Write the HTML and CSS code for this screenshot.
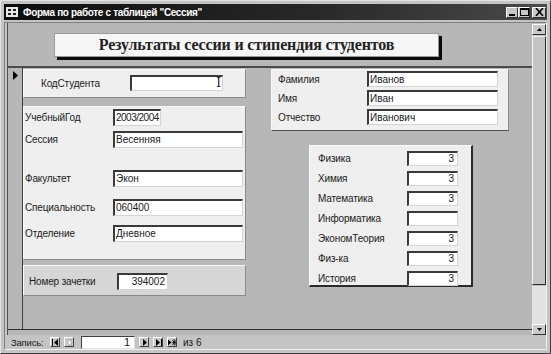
FILE: index.html
```html
<!DOCTYPE html>
<html lang="ru">
<head>
  <meta charset="UTF-8">
  <title>Форма по работе с таблицей "Сессия"</title>
  <link rel="stylesheet" href="styles.css">
</head>
<body>
<div class="window">
  <div class="titlebar">
    <svg class="app-icon" width="12" height="10" viewBox="0 0 12 10">
      <rect x="0.5" y="0.5" width="11" height="9" fill="#e8e8e8" stroke="#e8e8e8"/>
      <rect x="2" y="2" width="3" height="2" fill="#202020"/>
      <rect x="7" y="2" width="3" height="2" fill="#202020"/>
      <rect x="2" y="6" width="3" height="2" fill="#202020"/>
      <rect x="7" y="6" width="3" height="2" fill="#202020"/>
    </svg>
    <span class="title">Форма по работе с таблицей "Сессия"</span>
    <div class="caption-buttons">
      <div class="cap-btn">
        <svg width="8" height="7" viewBox="0 0 8 7"><rect x="1" y="5" width="6" height="2" fill="#000"/></svg>
      </div>
      <div class="cap-btn">
        <svg width="9" height="8" viewBox="0 0 9 8"><rect x="0.5" y="0.5" width="8" height="7" fill="none" stroke="#000"/><rect x="0" y="0" width="9" height="2" fill="#000"/></svg>
      </div>
      <div class="cap-btn cap-close">
        <svg width="9" height="8" viewBox="0 0 9 8"><path d="M1 0 L8 8 M8 0 L1 8" stroke="#000" stroke-width="1.6"/></svg>
      </div>
    </div>
  </div>

  <div class="client">
    <div class="form-row">
      <div class="form">
        <div class="form-header">
          <div class="form-title">Результаты сессии и стипендия студентов</div>
        </div>

        <div class="detail">
          <div class="selector">
            <svg width="6" height="9" viewBox="0 0 6 9"><path d="M0 0 L5 4.5 L0 9 Z" fill="#000"/></svg>
          </div>

          <div class="detail-body">
            <div class="col-left">
              <div class="panel panel-key">
                <div class="field">
                  <span class="label">КодСтудента</span>
                  <div class="textbox tb-key"><span class="ibeam">I</span></div>
                </div>
              </div>

              <div class="panel panel-info">
                <div class="field">
                  <span class="label">УчебныйГод</span>
                  <div class="textbox tb-year">2003/2004</div>
                </div>
                <div class="field">
                  <span class="label">Сессия</span>
                  <div class="textbox tb-wide">Весенняя</div>
                </div>
                <div class="field">
                  <span class="label">Факультет</span>
                  <div class="textbox tb-wide">Экон</div>
                </div>
                <div class="field">
                  <span class="label">Специальность</span>
                  <div class="textbox tb-wide">060400</div>
                </div>
                <div class="field">
                  <span class="label">Отделение</span>
                  <div class="textbox tb-wide">Дневное</div>
                </div>
              </div>

              <div class="panel panel-book">
                <div class="field">
                  <span class="label">Номер зачетки</span>
                  <div class="textbox tb-num">394002</div>
                </div>
              </div>
            </div>

            <div class="col-right">
              <div class="panel panel-name">
                <div class="field">
                  <span class="label">Фамилия</span>
                  <div class="textbox tb-name">Иванов</div>
                </div>
                <div class="field">
                  <span class="label">Имя</span>
                  <div class="textbox tb-name">Иван</div>
                </div>
                <div class="field">
                  <span class="label">Отчество</span>
                  <div class="textbox tb-name">Иванович</div>
                </div>
              </div>

              <div class="panel panel-grades">
                <div class="field"><span class="label">Физика</span><div class="textbox tb-grade">3</div></div>
                <div class="field"><span class="label">Химия</span><div class="textbox tb-grade">3</div></div>
                <div class="field"><span class="label">Математика</span><div class="textbox tb-grade">3</div></div>
                <div class="field"><span class="label">Информатика</span><div class="textbox tb-grade"></div></div>
                <div class="field"><span class="label">ЭкономТеория</span><div class="textbox tb-grade">3</div></div>
                <div class="field"><span class="label">Физ-ка</span><div class="textbox tb-grade">3</div></div>
                <div class="field"><span class="label">История</span><div class="textbox tb-grade">3</div></div>
              </div>
            </div>
          </div>
        </div>
      </div>

      <div class="vscroll">
        <div class="scroll-btn">
          <svg width="5" height="3" viewBox="0 0 5 3"><path d="M2.5 0 L5 3 L0 3 Z" fill="#000"/></svg>
        </div>
        <div class="scroll-thumb"></div>
        <div class="scroll-track"></div>
        <div class="scroll-btn">
          <svg width="5" height="3" viewBox="0 0 5 3"><path d="M0 0 L5 0 L2.5 3 Z" fill="#000"/></svg>
        </div>
      </div>
    </div>

    <div class="navbar">
      <span class="nav-label">Запись:</span>
      <div class="nav-btn">
        <svg width="7" height="7" viewBox="0 0 7 7"><rect x="0" y="0" width="1" height="7" fill="#000"/><path d="M6 0 L2 3.5 L6 7 Z" fill="#000"/></svg>
      </div>
      <div class="nav-btn nav-disabled">
        <svg width="5" height="7" viewBox="0 0 5 7"><path d="M4 0 L0 3.5 L4 7 Z" fill="#fff"/></svg>
      </div>
      <div class="nav-input">1</div>
      <div class="nav-btn">
        <svg width="5" height="7" viewBox="0 0 5 7"><path d="M1 0 L5 3.5 L1 7 Z" fill="#000"/></svg>
      </div>
      <div class="nav-btn">
        <svg width="7" height="7" viewBox="0 0 7 7"><path d="M1 0 L5 3.5 L1 7 Z" fill="#000"/><rect x="6" y="0" width="1" height="7" fill="#000"/></svg>
      </div>
      <div class="nav-btn">
        <svg width="9" height="7" viewBox="0 0 9 7"><path d="M0 0 L4 3.5 L0 7 Z" fill="#000"/><path d="M5 1 L9 6 M9 1 L5 6 M7 0 L7 7 M5 3.5 L9 3.5" stroke="#000" stroke-width="1"/></svg>
      </div>
      <span class="nav-count">из 6</span>
    </div>
  </div>
</div>
</body>
</html>
```

FILE: styles.css
```css
* {
  box-sizing: border-box;
  margin: 0;
  padding: 0;
}

body {
  width: 551px;
  height: 354px;
  overflow: hidden;
  background: #c8c8c8;
  font-family: 'Liberation Sans', Arial, sans-serif;
  font-size: 10px;
  color: #1a1a1a;
}

.window {
  width: 551px;
  height: 354px;
  padding: 3px;
  background: #c4c4c4;
  border: 1px solid;
  border-color: #e4e4e4 #404040 #404040 #e4e4e4;
  display: flex;
  flex-direction: column;
}

/* title bar */
.titlebar {
  height: 16px;
  display: flex;
  align-items: center;
  padding-left: 2px;
  background: linear-gradient(to right, #0c0c0c, #2a2a2a 60%, #4a4a4a);
  color: #fff;
}

.app-icon {
  margin-right: 5px;
}

.title {
  font-weight: bold;
  font-size: 10px;
  letter-spacing: -0.35px;
}

.caption-buttons {
  margin-left: auto;
  margin-right: 1px;
  display: flex;
  align-items: center;
}

.cap-btn {
  width: 12px;
  height: 11px;
  background: #c8c8c8;
  border: 1px solid;
  border-color: #fff #303030 #303030 #fff;
  display: flex;
  align-items: center;
  justify-content: center;
}

.cap-close {
  width: 14px;
  margin-left: 2px;
}

/* client area */
.client {
  flex: 1;
  margin-top: 2px;
  border: 1px solid;
  border-color: #808080 #f0f0f0 #f0f0f0 #808080;
  display: flex;
  flex-direction: column;
}

.form-row {
  flex: 1;
  display: flex;
}

.form {
  flex: 1;
  margin-left: 2px;
  border-left: 1px solid #505050;
  background: #b7b7b7;
  display: flex;
  flex-direction: column;
}

.form-header {
  height: 45px;
  padding: 10px 0 0 46px;
  border-bottom: 2px solid #4a4a4a;
}

.form-title {
  width: 385px;
  height: 24px;
  background: #f6f6f6;
  border: 1px solid #9a9a9a;
  box-shadow: 3px 3px 0 #0a0a0a;
  font-family: 'Liberation Serif', 'Times New Roman', serif;
  font-weight: bold;
  font-size: 16px;
  letter-spacing: -0.15px;
  color: #222;
  text-align: center;
  line-height: 22px;
}

.detail {
  height: 262px;
  display: flex;
  border-bottom: 1px solid #303030;
}

.selector {
  width: 15px;
  border-right: 1px solid #404040;
  padding: 3px 0 0 5px;
}

.detail-body {
  flex: 1;
  display: flex;
  padding-top: 1px;
}

.col-left {
  width: 223px;
}

.col-right {
  margin-left: 25px;
}

/* panels */
.panel {
  background: #efefef;
  border: 1px solid;
  border-color: #fafafa #8a8a8a #8a8a8a #fafafa;
}

.panel-key {
  height: 29px;
  padding: 5px 0 0 17px;
}

.panel-key .label {
  width: 89px;
}

.panel-info {
  height: 154px;
  margin-top: 8px;
  padding: 2px 0 0 1px;
}

.panel-info .label {
  width: 88px;
}

.panel-info .field:nth-child(2) { margin-top: 5px; }
.panel-info .field:nth-child(3) { margin-top: 22px; }
.panel-info .field:nth-child(4) { margin-top: 12px; }
.panel-info .field:nth-child(5) { margin-top: 9px; }

.panel-book {
  height: 31px;
  margin-top: 5px;
  padding: 7px 0 0 5px;
  background: #d6d6d6;
}

.panel-book .label {
  width: 88px;
}

.panel-name {
  width: 238px;
  height: 62px;
  padding: 1px 0 0 6px;
  border-bottom-color: #505050;
}

.panel-name .field + .field {
  margin-top: 3px;
}

.panel-name .label {
  width: 89px;
}

.panel-grades {
  width: 164px;
  height: 142px;
  margin: 14px 0 0 38px;
  padding: 5px 0 0 8px;
  border-width: 1px 2px 2px 1px;
  border-color: #fafafa #2a2a2a #2a2a2a #fafafa;
}

.panel-grades .field + .field {
  margin-top: 5px;
}

.panel-grades .label {
  width: 89px;
}

/* fields */
.field {
  display: flex;
  align-items: center;
}

.label {
  flex-shrink: 0;
  white-space: nowrap;
  letter-spacing: -0.15px;
}

.textbox {
  height: 17px;
  background: #fff;
  border-style: solid;
  border-width: 2px 1px 1px 2px;
  border-color: #3a3a3a #d4d4d4 #d4d4d4 #3a3a3a;
  padding-left: 1px;
  line-height: 13px;
  white-space: nowrap;
  overflow: hidden;
}

.tb-key {
  width: 93px;
  height: 16px;
  text-align: right;
  padding-right: 1px;
}

.ibeam {
  font-family: 'DejaVu Serif', serif;
  font-size: 12px;
  line-height: 12px;
}

.tb-year {
  width: 48px;
  letter-spacing: -0.5px;
}

.tb-wide {
  width: 130px;
}

.tb-num {
  width: 51px;
  text-align: right;
  padding-right: 2px;
}

.tb-name {
  width: 131px;
  height: 16px;
}

.tb-grade {
  width: 51px;
  height: 15px;
  text-align: right;
  padding-right: 3px;
  line-height: 12px;
}

/* scrollbar */
.vscroll {
  width: 14px;
  padding-top: 1px;
  display: flex;
  flex-direction: column;
  background: #c0c0c0;
}

.scroll-btn {
  height: 11px;
  background: #cacaca;
  border: 1px solid;
  border-color: #fff #303030 #303030 #fff;
  display: flex;
  align-items: center;
  justify-content: center;
}

.scroll-thumb {
  height: 249px;
  margin: 1px 0;
  background: #c4c4c4;
  border: 1px solid;
  border-color: #f4f4f4 #2a2a2a #2a2a2a #f4f4f4;
}

.scroll-track {
  flex: 1;
  background: #e2e2e2;
}

/* record navigation */
.navbar {
  height: 14px;
  display: flex;
  align-items: center;
  padding-left: 6px;
  background: #c4c4c4;
  font-size: 10px;
}

.nav-label {
  flex-shrink: 0;
  width: 39px;
  font-size: 9.5px;
  letter-spacing: -0.2px;
  white-space: nowrap;
}

.nav-btn {
  width: 10px;
  height: 10px;
  margin-right: 4px;
  background: #c8c8c8;
  border: 1px solid;
  border-color: #fff #404040 #404040 #fff;
  display: flex;
  align-items: center;
  justify-content: center;
}

.nav-disabled path {
  stroke: #888;
  stroke-width: 0.6;
}

.nav-input {
  width: 54px;
  height: 13px;
  margin: 0 4px 0 3px;
  background: #fff;
  border-style: solid;
  border-width: 1px;
  border-color: #404040 #e0e0e0 #e0e0e0 #404040;
  text-align: right;
  padding-right: 4px;
  line-height: 11px;
  font-size: 11px;
}

.nav-count {
  margin-left: 2px;
}
```
